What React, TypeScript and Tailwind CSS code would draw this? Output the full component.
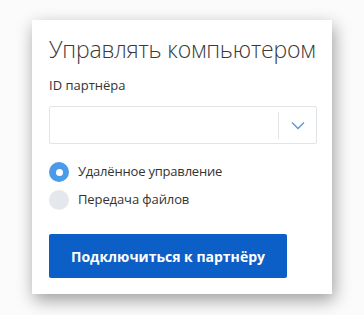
import React from "react";

export default function App() {
  return (
    <div className="w-[364px] h-[315px] bg-[#fbfbfb] pt-[20px] pl-[32px]" style={{ fontFamily: '"Open Sans", "Noto Sans", sans-serif' }}>
      <div className="w-[300px] h-[274px] bg-white shadow-[2px_6px_16px_rgba(0,0,0,0.38)] pl-[17px] pr-[15px] pt-[14px]">
        <h1 className="text-[23px] font-light text-[#3a3a3a] leading-[30px] tracking-[-0.2px] whitespace-nowrap">Управлять компьютером</h1>
        <div className="mt-[12px] text-[13px] text-[#333] leading-[18px]">ID партнёра</div>
        <div className="mt-[12px] w-[268px] h-[38px] border border-[#dfe4e8] rounded-[2px] flex items-center">
          <div className="flex-1" />
          <div className="w-px h-[27px] bg-[#dfe4e8]" />
          <div className="w-[37px] flex items-center justify-center">
            <svg width="14" height="9" viewBox="0 0 14 9" fill="none">
              <path d="M1 1.5 L7 7.5 L13 1.5" stroke="#5e97cf" strokeWidth="1.4" />
            </svg>
          </div>
        </div>
        <div className="mt-[18px] flex items-center gap-[9px] h-[20px]">
          <div className="w-[20px] h-[20px] rounded-full bg-[#4b9be8] flex items-center justify-center">
            <div className="w-[7px] h-[7px] rounded-full bg-white" />
          </div>
          <span className="text-[13px] tracking-[-0.2px] text-[#333]">Удалённое управление</span>
        </div>
        <div className="mt-[8px] flex items-center gap-[9px] h-[20px]">
          <div className="w-[20px] h-[20px] rounded-full bg-[#e4e7eb]" />
          <span className="text-[13px] tracking-[-0.1px] text-[#333]">Передача файлов</span>
        </div>
        <button className="mt-[24px] w-[238px] h-[44px] rounded-[2px] bg-[#0b5fc6] text-white text-[14px] font-bold">Подключиться к партнёру</button>
      </div>
    </div>
  );
}
